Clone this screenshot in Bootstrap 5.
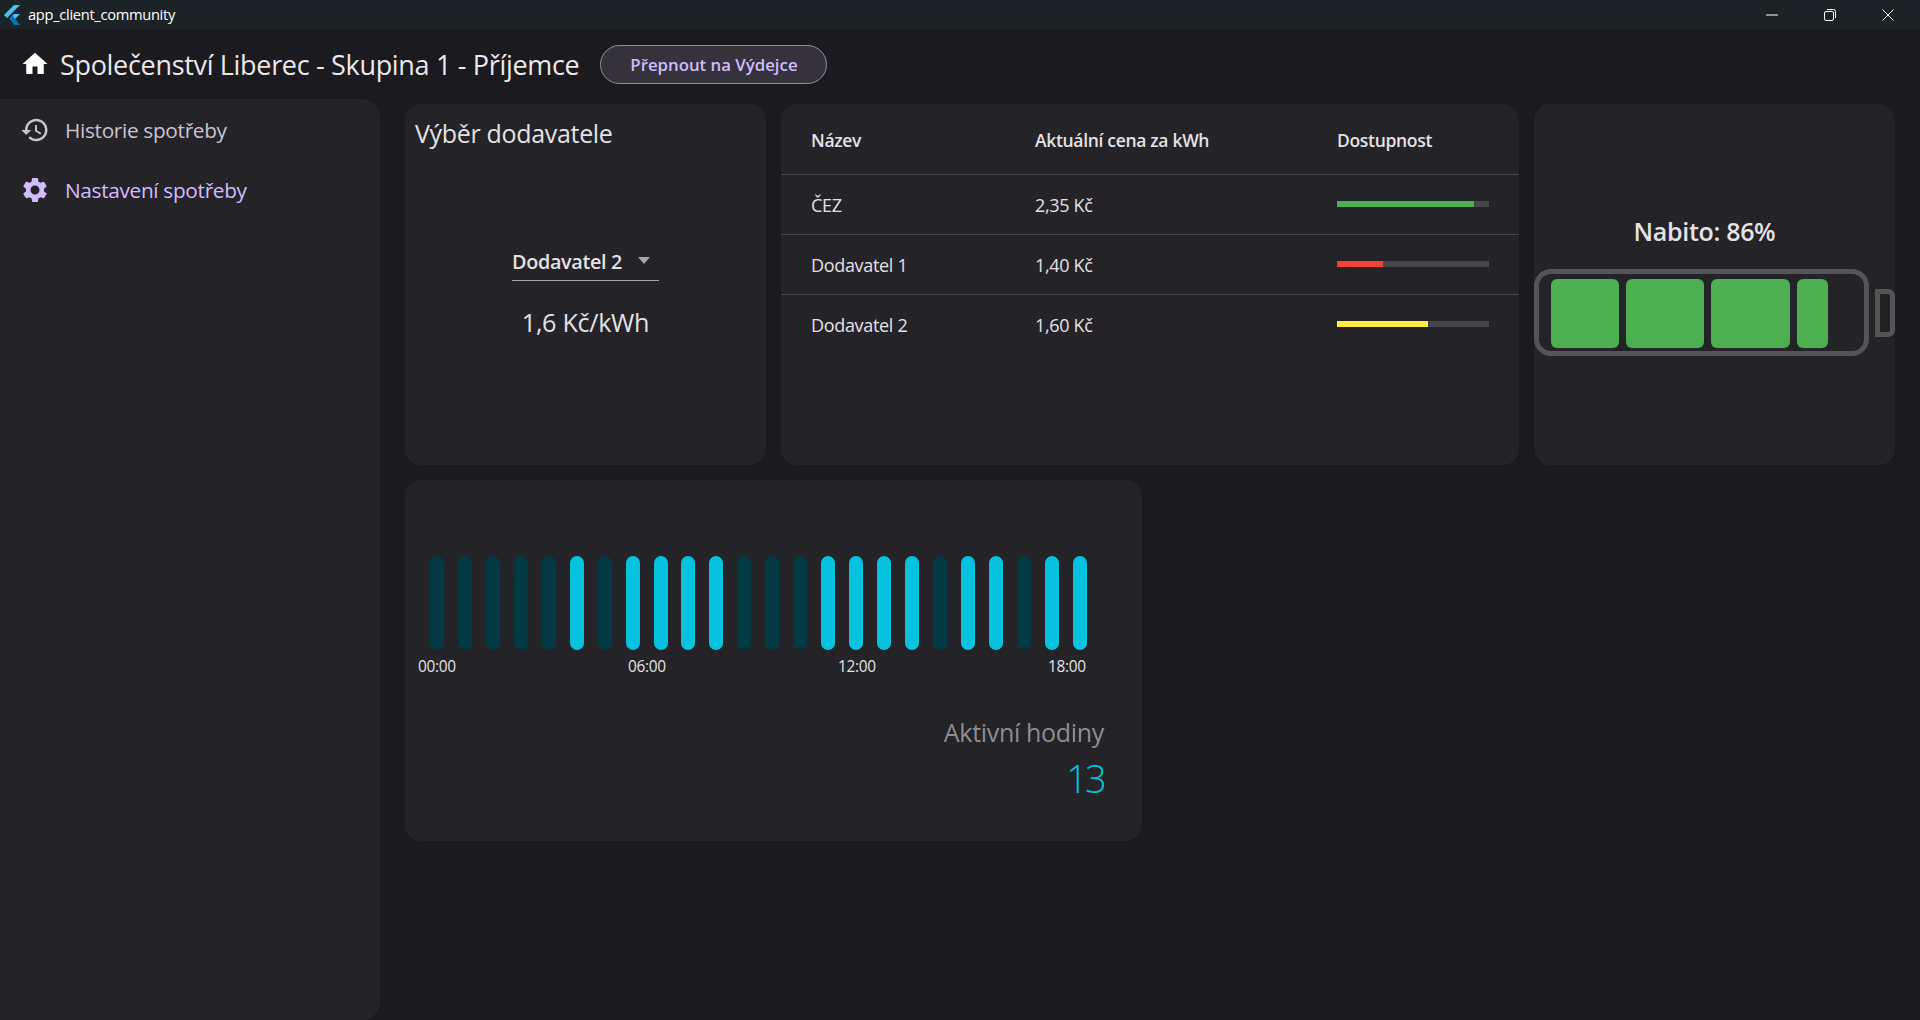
<!DOCTYPE html>
<html lang="cs">
<head>
<meta charset="utf-8">
<title>app_client_community</title>
<link href="https://cdn.jsdelivr.net/npm/bootstrap@5.3.0/dist/css/bootstrap.min.css" rel="stylesheet">
<style>
html,body{height:100%;}
body{background:#1a1a1f;color:#e6e1e5;font-family:"Open Sans","Noto Sans",sans-serif;overflow:hidden;letter-spacing:-.02em;}
.shell{height:1020px;}
.winbar{height:29px;background:#1c2327;color:#fff;font-size:14.7px;padding-left:4px;flex:none;}
.winbar-title{margin-left:7px;}
.winctl{margin-left:auto;padding-right:3px;}
.winctl svg{display:block;}
.winbtn{width:58px;height:29px;}
.appbar{height:70px;flex:none;padding-left:20px;}
.appbar-title{font-size:27px;margin-left:10px;color:#ece7ea;padding-top:2px;}
.swbtn{width:227px;height:39px;margin-left:21px;border:1px solid #938f99;border-radius:20px;background:#35323c;color:#d0bcff;font-size:16.8px;font-weight:600;padding:2px 0 0;}
.sidepanel{width:380px;flex:none;background:#232328;border-radius:0 18px 18px 0;padding-top:1px;}
.sideitem{height:60px;padding-left:20px;gap:15px;font-size:20.8px;color:#cac4d0;}
.sideitem span{padding-top:2px;}
.sideitem svg{fill:currentColor;flex:none;margin-top:-1px;}
.sideitem.active-item{color:#d0bcff;}
.work{padding:5px 25px 0 25px;gap:15px;flex:1;min-width:0;}
.tile-row{gap:15px;}
.tile{background:#232328;border-radius:16px;height:361px;flex:none;}
.w-s{width:361px;}
.w-l{width:738px;}
.w-h{width:737px;}
.tile-title{font-size:25px;padding:14px 0 0 10px;line-height:30px;}
.supplier-box{margin-top:96px;}
.supplier-sel{width:147px;height:37px;border-bottom:1px solid #a8a4ab;font-weight:600;font-size:19.8px;padding-left:0;}
.caret-tri{width:0;height:0;border-left:6.5px solid transparent;border-right:6.5px solid transparent;border-top:7px solid #a8a4ab;margin-left:16px;margin-top:-3px;}
.supplier-price{font-size:25.2px;margin-top:25px;line-height:32px;}
.tbl{width:100%;table-layout:fixed;margin:0;--bs-table-bg:transparent;--bs-table-color:#e6e1e5;--bs-table-border-color:#47464c;font-size:18px;}
.tbl th,.tbl td{padding:4px 0 0 30px;vertical-align:middle;border-bottom:1px solid #47464c;}
.tbl tr:last-child td{border-bottom:0;}
.tbl thead th{height:70px;font-weight:600;font-size:17.5px;padding-top:2px;}
.tbl tbody td{height:60px;padding-top:3px;}
.c1{width:224px;}
.c2{width:302px;}
.meter{width:152px;height:6px;background:#47464c;margin-top:-3px;}
.meter-fill{height:100%;}
.charge-title{font-size:25px;font-weight:600;text-align:center;padding-top:111px;line-height:32px;padding-right:20px;}
.batt-row{margin-top:22px;}
.batt-body{width:335px;height:87px;border:5px solid #555;border-radius:17px;padding:5px 12px;gap:7px;}
.cell-g{height:69px;background:#4caf50;border-radius:6px;flex:none;}
.batt-cap{width:20px;height:48px;border:5px solid #555;border-radius:0 7px 7px 0;background:#222;margin-left:6px;}
.bars-wrap{padding:76px 0 0 25px;gap:13.95px;}
.hourbar{width:14px;height:94px;border-radius:7px;background:#023a44;flex:none;}
.hourbar.on{background:#05c3de;}
.hour-row{padding:7px 0 0 13px;font-size:15.4px;line-height:20px;}
.hour-lbl{width:210px;flex:none;color:#e6e1e5;}
.stat-box{text-align:right;padding:39px 38px 0 0;}
.stat-label{font-size:25px;color:#8f8d92;line-height:32px;}
.stat-val{font-size:38px;color:#05c3de;line-height:48px;margin-top:6px;font-weight:300;letter-spacing:-.07em;}
</style>
</head>
<body>
<div class="shell d-flex flex-column">
  <div class="winbar d-flex align-items-center">
    <svg width="17" height="20" viewBox="0 0 17 20"><polygon points="10,0 16,0 3,13 0,10" fill="#47c5fb"/><polygon points="10,9 16,9 8.5,16.5 5.5,13.5" fill="#47c5fb"/><polygon points="5.5,13.5 8.5,10.5 16,20 10,20" fill="#0a6fb5"/></svg>
    <span class="winbar-title">app_client_community</span>
    <div class="winctl d-flex">
      <div class="winbtn d-flex align-items-center justify-content-center"><svg width="12" height="12" viewBox="0 0 12 12"><path d="M0 6h12" stroke="#fff" fill="none"/></svg></div>
      <div class="winbtn d-flex align-items-center justify-content-center"><svg width="12" height="12" viewBox="0 0 12 12"><rect x=".5" y="2.5" width="9" height="9" rx="1.5" stroke="#fff" fill="none"/><path d="M3 .5h6.5a2 2 0 0 1 2 2V9" stroke="#fff" fill="none"/></svg></div>
      <div class="winbtn d-flex align-items-center justify-content-center"><svg width="12" height="12" viewBox="0 0 12 12"><path d="M.5.5l11 11M11.5.5l-11 11" stroke="#fff" fill="none"/></svg></div>
    </div>
  </div>
  <div class="appbar d-flex align-items-center">
    <svg width="30" height="30" viewBox="0 0 24 24" fill="#fff"><path d="M10 20v-6h4v6h5v-8h3L12 3 2 12h3v8z"/></svg>
    <span class="appbar-title">Společenství Liberec - Skupina 1 - Příjemce</span>
    <button type="button" class="btn swbtn">Přepnout na Výdejce</button>
  </div>
  <div class="d-flex flex-grow-1">
    <nav class="sidepanel">
      <div class="sideitem d-flex align-items-center">
        <svg width="30" height="30" viewBox="0 0 24 24"><path d="M13 3c-4.97 0-9 4.03-9 9H1l3.89 3.89.07.14L9 12H6c0-3.87 3.13-7 7-7s7 3.13 7 7-3.13 7-7 7c-1.93 0-3.68-.79-4.94-2.06l-1.42 1.42C8.27 19.99 10.51 21 13 21c4.97 0 9-4.03 9-9s-4.03-9-9-9zm-1 5v5l4.28 2.54.72-1.21-3.5-2.08V8H12z"/></svg>
        <span>Historie spotřeby</span>
      </div>
      <div class="sideitem active-item d-flex align-items-center">
        <svg width="30" height="30" viewBox="0 0 24 24"><path d="M19.14 12.94c.04-.3.06-.61.06-.94 0-.32-.02-.64-.07-.94l2.03-1.58c.18-.14.23-.41.12-.61l-1.92-3.32c-.12-.22-.37-.29-.59-.22l-2.39.96c-.5-.38-1.03-.7-1.62-.94l-.36-2.54c-.04-.24-.24-.41-.48-.41h-3.84c-.24 0-.43.17-.47.41l-.36 2.54c-.59.24-1.13.57-1.62.94l-2.39-.96c-.22-.08-.47 0-.59.22L2.74 8.87c-.12.21-.08.47.12.61l2.03 1.58c-.05.3-.09.63-.09.94s.02.64.07.94l-2.03 1.58c-.18.14-.23.41-.12.61l1.92 3.32c.12.22.37.29.59.22l2.39-.96c.5.38 1.03.7 1.62.94l.36 2.54c.05.24.24.41.48.41h3.84c.24 0 .44-.17.47-.41l.36-2.54c.59-.24 1.13-.56 1.62-.94l2.39.96c.22.08.47 0 .59-.22l1.92-3.32c.12-.22.07-.47-.12-.61l-2.01-1.58zM12 15.6c-1.98 0-3.6-1.62-3.6-3.6s1.62-3.6 3.6-3.6 3.6 1.62 3.6 3.6-1.62 3.6-3.6 3.6z"/></svg>
        <span>Nastavení spotřeby</span>
      </div>
    </nav>
    <main class="work d-flex flex-column">
      <div class="d-flex tile-row">
        <section class="tile w-s">
          <div class="tile-title">Výběr dodavatele</div>
          <div class="supplier-box d-flex flex-column align-items-center">
            <div class="supplier-sel d-flex align-items-center">Dodavatel 2<span class="caret-tri"></span></div>
            <div class="supplier-price">1,6 Kč/kWh</div>
          </div>
        </section>
        <section class="tile w-l">
          <table class="table tbl">
            <colgroup><col class="c1"><col class="c2"><col></colgroup>
            <thead><tr><th>Název</th><th>Aktuální cena za kWh</th><th>Dostupnost</th></tr></thead>
            <tbody>
              <tr><td>ČEZ</td><td>2,35 Kč</td><td><div class="meter"><div class="meter-fill" style="width:90%;background:#4caf50"></div></div></td></tr>
              <tr><td>Dodavatel 1</td><td>1,40 Kč</td><td><div class="meter"><div class="meter-fill" style="width:30%;background:#f44336"></div></div></td></tr>
              <tr><td>Dodavatel 2</td><td>1,60 Kč</td><td><div class="meter"><div class="meter-fill" style="width:60%;background:#ffeb3b"></div></div></td></tr>
            </tbody>
          </table>
        </section>
        <section class="tile w-s">
          <div class="charge-title">Nabito: 86%</div>
          <div class="batt-row d-flex align-items-center">
            <div class="batt-body d-flex">
              <div class="cell-g" style="width:68px"></div>
              <div class="cell-g" style="width:78px"></div>
              <div class="cell-g" style="width:79px"></div>
              <div class="cell-g" style="width:31px"></div>
            </div>
            <div class="batt-cap"></div>
          </div>
        </section>
      </div>
      <section class="tile w-h">
        <div class="bars-wrap d-flex">
          <div class="hourbar"></div><div class="hourbar"></div><div class="hourbar"></div><div class="hourbar"></div><div class="hourbar"></div><div class="hourbar on"></div><div class="hourbar"></div><div class="hourbar on"></div><div class="hourbar on"></div><div class="hourbar on"></div><div class="hourbar on"></div><div class="hourbar"></div><div class="hourbar"></div><div class="hourbar"></div><div class="hourbar on"></div><div class="hourbar on"></div><div class="hourbar on"></div><div class="hourbar on"></div><div class="hourbar"></div><div class="hourbar on"></div><div class="hourbar on"></div><div class="hourbar"></div><div class="hourbar on"></div><div class="hourbar on"></div>
        </div>
        <div class="hour-row d-flex">
          <span class="hour-lbl">00:00</span><span class="hour-lbl">06:00</span><span class="hour-lbl">12:00</span><span class="hour-lbl">18:00</span>
        </div>
        <div class="stat-box">
          <div class="stat-label">Aktivní hodiny</div>
          <div class="stat-val">13</div>
        </div>
      </section>
    </main>
  </div>
</div>
</body>
</html>
